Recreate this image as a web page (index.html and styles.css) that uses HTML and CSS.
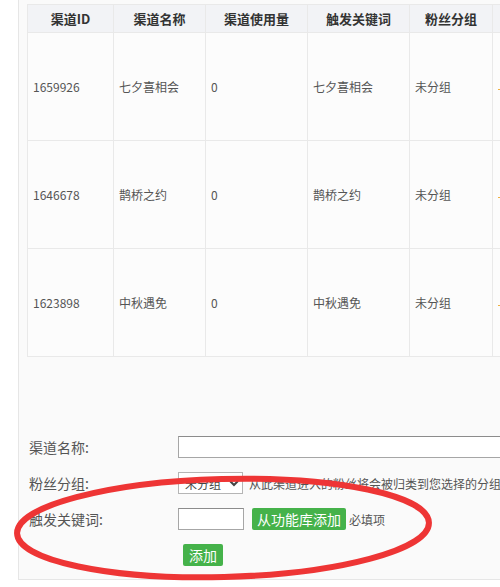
FILE: index.html
```html
<!DOCTYPE html>
<html lang="zh-CN">
<head>
    <meta charset="UTF-8">
    <title>渠道管理</title>
    <link rel="stylesheet" href="styles.css">
</head>
<body>
    <div class="page">
        <div class="panel">
            <table class="channel-table">
                <colgroup>
                    <col style="width: 86px">
                    <col style="width: 92px">
                    <col style="width: 102px">
                    <col style="width: 102px">
                    <col style="width: 83px">
                    <col style="width: 90px">
                </colgroup>
                <thead>
                    <tr>
                        <th>渠道ID</th>
                        <th>渠道名称</th>
                        <th>渠道使用量</th>
                        <th>触发关键词</th>
                        <th>粉丝分组</th>
                        <th></th>
                    </tr>
                </thead>
                <tbody>
                    <tr>
                        <td>1659926</td>
                        <td>七夕喜相会</td>
                        <td>0</td>
                        <td>七夕喜相会</td>
                        <td>未分组</td>
                        <td><span class="op-mark"></span></td>
                    </tr>
                    <tr>
                        <td>1646678</td>
                        <td>鹊桥之约</td>
                        <td>0</td>
                        <td>鹊桥之约</td>
                        <td>未分组</td>
                        <td><span class="op-mark"></span></td>
                    </tr>
                    <tr>
                        <td>1623898</td>
                        <td>中秋遇免</td>
                        <td>0</td>
                        <td>中秋遇免</td>
                        <td>未分组</td>
                        <td><span class="op-mark"></span></td>
                    </tr>
                </tbody>
            </table>

            <!-- 添加渠道 -->
            <div class="add-form">
                <div class="form-row">
                    <label class="form-label">渠道名称:</label>
                    <input type="text" class="input-name">
                </div>
                <div class="form-row">
                    <label class="form-label">粉丝分组:</label>
                    <select class="group-select">
                        <option>未分组</option>
                    </select>
                    <span class="hint">从此渠道进入的粉丝将会被归类到您选择的分组</span>
                </div>
                <div class="form-row">
                    <label class="form-label">触发关键词:</label>
                    <input type="text" class="input-keyword">
                    <button class="btn-green btn-lib">从功能库添加</button>
                    <span class="hint">必填项</span>
                </div>
                <div class="form-row submit-row">
                    <button class="btn-green btn-add">添加</button>
                </div>
            </div>
        </div>

        <!-- 红圈标注 -->
        <svg class="mark" width="440" height="120" viewBox="0 0 440 120">
            <ellipse cx="213" cy="58" rx="206" ry="49" fill="none" stroke="#ee3535" stroke-width="6" transform="rotate(-1.5 213 58)"/>
        </svg>
    </div>
</body>
</html>
```

FILE: styles.css
```css
body {
    margin: 0;
    background: #fff;
    font-family: "Microsoft YaHei", "Noto Sans CJK SC", sans-serif;
    color: #555;
    overflow: hidden;
}

.page {
    position: relative;
    width: 500px;
    height: 587px;
    overflow: hidden;
}

/* 面板 */
.panel {
    margin-left: 18px;
    width: 620px;
    height: 575px;
    padding: 4px 0 0 8px;
    background: #fafafa;
    border: 1px solid #e6e6e6;
    border-top: none;
    border-right: none;
}

/* 渠道列表 */
.channel-table {
    border-collapse: collapse;
    table-layout: fixed;
    width: 555px;
    font-size: 12px;
}

.channel-table th,
.channel-table td {
    border: 1px solid #e9e9e9;
}

.channel-table th {
    height: 27px;
    padding: 0;
    background: #f2f3f6;
    color: #333;
    font-size: 13px;
    font-weight: bold;
    text-align: center;
}

.channel-table td {
    height: 107px;
    padding: 0 5px;
    background: #fcfcfc;
    text-align: left;
    vertical-align: middle;
}

/* 操作列的橙色链接 */
.op-mark {
    display: block;
    width: 14px;
    height: 1px;
    margin-top: 6px;
    background: #f0b040;
}

/* 表单 */
.add-form {
    margin-top: 78px;
    padding-left: 2px;
}

.form-row {
    display: flex;
    align-items: center;
    height: 24px;
    margin-bottom: 12px;
}

.form-label {
    width: 149px;
    font-size: 14px;
    color: #555;
}

.input-name {
    width: 340px;
    height: 22px;
    box-sizing: border-box;
    border: 1px solid #a6a6a6;
    border-top-color: #8c8c8c;
    background: #fff;
}

.group-select {
    width: 65px;
    height: 22px;
    font-size: 12px;
    font-family: inherit;
    border: 1px solid #b5b5b5;
    background: #fff;
    color: #444;
    padding: 0 2px;
}

.input-keyword {
    width: 66px;
    height: 22px;
    box-sizing: border-box;
    border: 1px solid #a6a6a6;
    border-top-color: #8c8c8c;
    background: #fff;
}

.hint {
    font-size: 12px;
    color: #555;
    margin-left: 6px;
    white-space: nowrap;
}

.btn-green {
    border: none;
    border-radius: 2px;
    background: #45b24a;
    color: #fff;
    font-family: inherit;
    font-size: 14px;
    height: 22px;
    line-height: 22px;
    cursor: pointer;
}

.btn-lib {
    margin-left: 8px;
    padding: 0 5px;
}

.btn-lib + .hint {
    margin-left: 3px;
}

.submit-row {
    margin-top: 2px;
    padding-left: 154px;
}

.btn-add {
    padding: 0 6px;
}

/* 标注 */
.mark {
    position: absolute;
    left: 10px;
    top: 470px;
}
```
